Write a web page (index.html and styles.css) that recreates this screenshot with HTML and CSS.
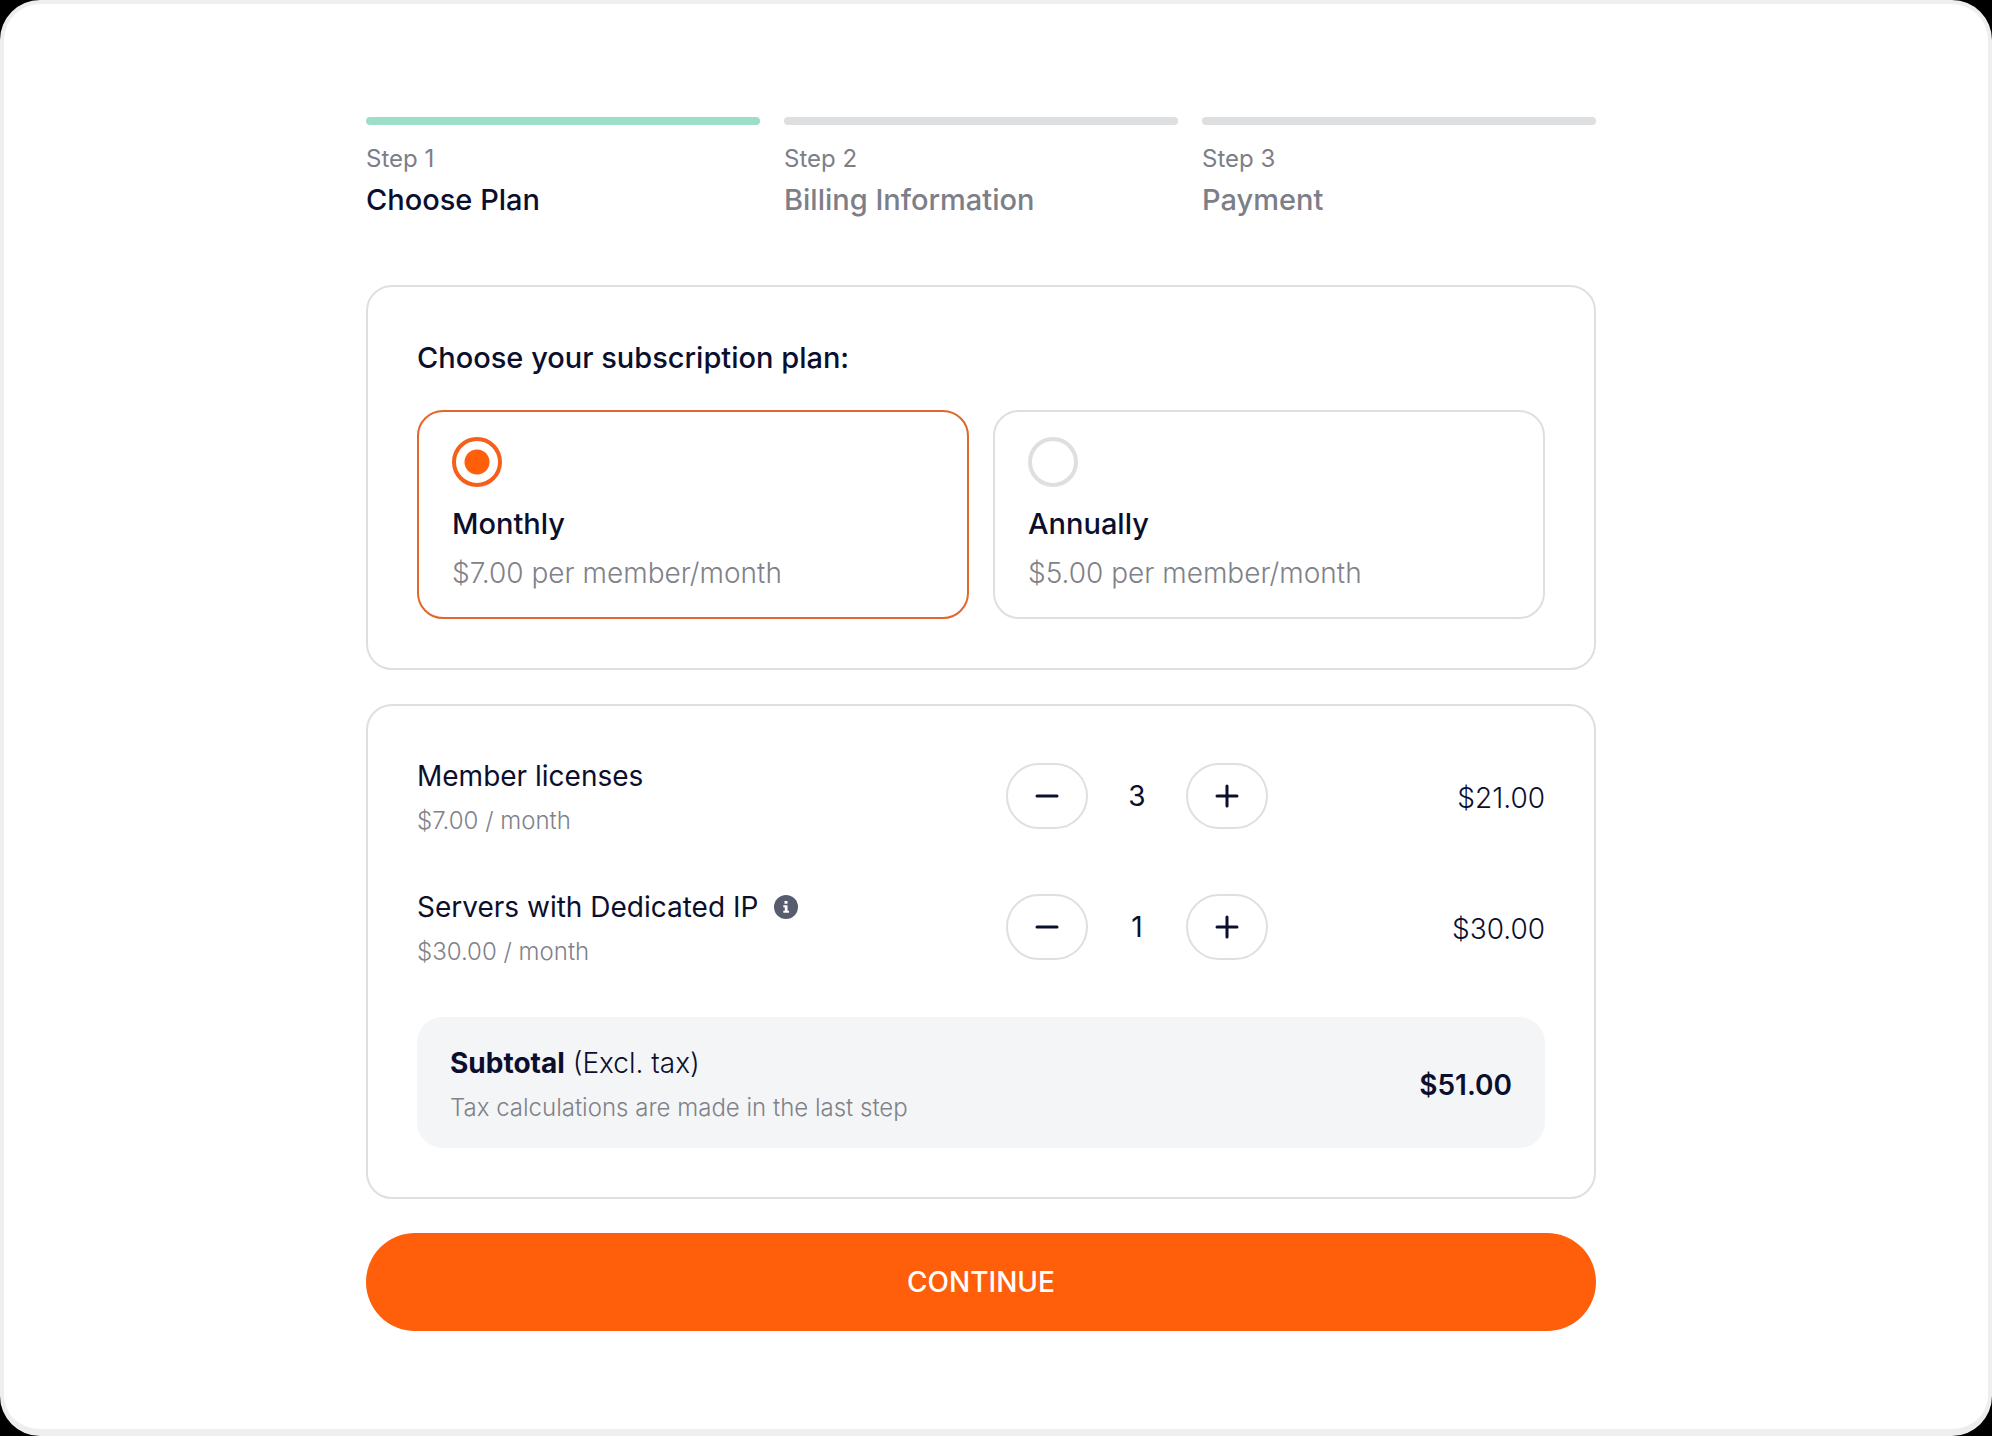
FILE: index.html
```html
<!DOCTYPE html>
<html lang="en">
<head>
<meta charset="utf-8">
<meta name="viewport" content="width=device-width, initial-scale=1">
<title>Choose Plan</title>
<link rel="stylesheet" href="styles.css">
</head>
<body>
<div class="window">
  <main class="checkout">
    <ol class="steps">
      <li class="step step--active" aria-current="step">
        <span class="step__number">Step 1</span>
        <span class="step__title">Choose Plan</span>
      </li>
      <li class="step">
        <span class="step__number">Step 2</span>
        <span class="step__title">Billing Information</span>
      </li>
      <li class="step">
        <span class="step__number">Step 3</span>
        <span class="step__title">Payment</span>
      </li>
    </ol>

    <form class="form">
      <section class="card">
        <h1 class="card__heading" id="plan-heading">Choose your subscription plan:</h1>
        <div class="plans" role="radiogroup" aria-labelledby="plan-heading">
          <label class="plan">
            <input class="plan__radio" type="radio" name="plan" value="monthly" checked>
            <span class="plan__name">Monthly</span>
            <span class="plan__price">$7.00 per member/month</span>
          </label>
          <label class="plan">
            <input class="plan__radio" type="radio" name="plan" value="annually">
            <span class="plan__name">Annually</span>
            <span class="plan__price">$5.00 per member/month</span>
          </label>
        </div>
      </section>

      <section class="card order">
        <div class="item">
          <div class="item__text">
            <span class="item__name">Member licenses</span>
            <span class="note">$7.00 / month</span>
          </div>
          <div class="stepper">
            <button class="stepper__button" type="button" aria-label="Remove a member license">
              <svg class="stepper__icon" viewBox="0 0 24 24" aria-hidden="true"><path d="M2 12h20"/></svg>
            </button>
            <output class="stepper__value">3</output>
            <button class="stepper__button" type="button" aria-label="Add a member license">
              <svg class="stepper__icon" viewBox="0 0 24 24" aria-hidden="true"><path d="M2 12h20M12 2v20"/></svg>
            </button>
          </div>
          <span class="item__total">$21.00</span>
        </div>

        <div class="item">
          <div class="item__text">
            <span class="item__name">Servers with Dedicated IP
              <svg class="info" viewBox="0 0 24 24" role="img" aria-label="More information">
                <circle cx="12" cy="12" r="12" fill="#575d6e"/>
                <path d="M10.500 6h3v2.800h-3zM9.300 10.300h4.200v5.400h1.500v2H9.300v-2h1.500v-3.400H9.300z" fill="#fff"/>
              </svg>
            </span>
            <span class="note">$30.00 / month</span>
          </div>
          <div class="stepper">
            <button class="stepper__button" type="button" aria-label="Remove a server">
              <svg class="stepper__icon" viewBox="0 0 24 24" aria-hidden="true"><path d="M2 12h20"/></svg>
            </button>
            <output class="stepper__value">1</output>
            <button class="stepper__button" type="button" aria-label="Add a server">
              <svg class="stepper__icon" viewBox="0 0 24 24" aria-hidden="true"><path d="M2 12h20M12 2v20"/></svg>
            </button>
          </div>
          <span class="item__total">$30.00</span>
        </div>

        <div class="subtotal">
          <div class="item__text">
            <span class="subtotal__title"><strong class="subtotal__label">Subtotal</strong> (Excl. tax)</span>
            <span class="note">Tax calculations are made in the last step</span>
          </div>
          <strong class="subtotal__amount">$51.00</strong>
        </div>
      </section>

      <button class="continue" type="submit">CONTINUE</button>
    </form>
  </main>
</div>
</body>
</html>
```
FILE: styles.css
```css
:root {
  --ink: #0b0f2e;
  --muted: #7f8289;
  --line: #dedfe0;
  --accent: #ff5f0a;
}

* {
  box-sizing: border-box;
}

body {
  margin: 0;
  background: #000;
  color: var(--ink);
  font-family: Inter, "Liberation Sans", sans-serif;
  font-size: 28px;
  line-height: 36px;
}

.window {
  min-height: 100vh;
  padding: 113px 34px 95px 4px;
  border: 4px solid #eeeeef;
  border-bottom-width: 7px;
  border-radius: 40px;
  background: #fff;
}

.checkout {
  max-width: 1230px;
  margin: 0 auto;
}

.steps {
  display: grid;
  grid-template-columns: repeat(3, 1fr);
  gap: 24px;
  margin: 0 0 67px;
  padding: 0;
  list-style: none;
}

.step {
  display: flex;
  flex-direction: column;
  gap: 7px;
  color: #7c7e88;
}

.step::before {
  content: "";
  height: 8px;
  margin-bottom: 11px;
  border-radius: 4px;
  background: var(--line);
}

.step--active::before {
  background: #9cdec7;
}

.step__number {
  font-size: 24px;
  line-height: 32px;
}

.step__title {
  font-size: 29px;
  font-weight: 500;
}

.step--active .step__title {
  color: var(--ink);
}

.form {
  display: flex;
  flex-direction: column;
  gap: 34px;
}

.card {
  padding: 49px;
  border: 2px solid var(--line);
  border-radius: 26px;
}

.card__heading {
  margin: 0 0 30px;
  font-size: 29px;
  font-weight: 500;
  line-height: 44px;
}

.plans {
  display: grid;
  grid-template-columns: 1fr 1fr;
  gap: 24px;
}

.plan {
  display: flex;
  flex-direction: column;
  padding: 25px 33px 24px;
  border: 2px solid var(--line);
  border-radius: 26px;
  line-height: 40px;
  cursor: pointer;
}

.plan:has(:checked) {
  border-color: #e2672b;
}

.plan__radio {
  appearance: none;
  width: 50px;
  height: 50px;
  margin: 0 0 17px;
  border: 4px solid var(--line);
  border-radius: 50%;
}

.plan__radio:checked {
  border-color: #f4601a;
  background: radial-gradient(circle, var(--accent) 12px, transparent 13px);
}

.plan__name {
  margin-bottom: 9px;
  font-size: 29px;
  font-weight: 500;
}

.plan__price {
  color: var(--muted);
  font-weight: 300;
}

.order {
  display: flex;
  flex-direction: column;
  gap: 46px;
}

.item {
  display: grid;
  grid-template-columns: 1fr 262px 277px;
  align-items: center;
  min-height: 85px;
}

.item__text {
  display: flex;
  flex-direction: column;
  gap: 11px;
}

.item__name {
  display: flex;
  align-items: center;
  gap: 16px;
}

.info {
  width: 24px;
  height: 24px;
}

.note {
  color: var(--muted);
  font-size: 24px;
  font-weight: 300;
  line-height: 32px;
}

.stepper {
  display: flex;
  align-items: center;
  justify-content: space-between;
  padding-bottom: 4px;
}

.stepper__button {
  display: flex;
  align-items: center;
  justify-content: center;
  width: 82px;
  height: 66px;
  padding: 0;
  border: 2px solid var(--line);
  border-radius: 33px;
  background: #fff;
  color: var(--ink);
  cursor: pointer;
}

.stepper__icon {
  width: 24px;
  height: 24px;
  fill: none;
  stroke: currentColor;
  stroke-width: 3;
  stroke-linecap: round;
}

.item__total {
  font-weight: 300;
  text-align: right;
}

.subtotal {
  display: flex;
  align-items: center;
  justify-content: space-between;
  padding: 28px 33px 24px;
  border-radius: 26px;
  background: #f4f5f7;
}

.subtotal__title {
  font-weight: 300;
}

.subtotal__label {
  font-weight: 700;
}

.subtotal__amount {
  font-weight: 600;
}

.continue {
  height: 98px;
  border: 0;
  border-radius: 49px;
  background: var(--accent);
  color: #fff;
  font: 500 28px/36px Inter, "Liberation Sans", sans-serif;
  cursor: pointer;
}
```
